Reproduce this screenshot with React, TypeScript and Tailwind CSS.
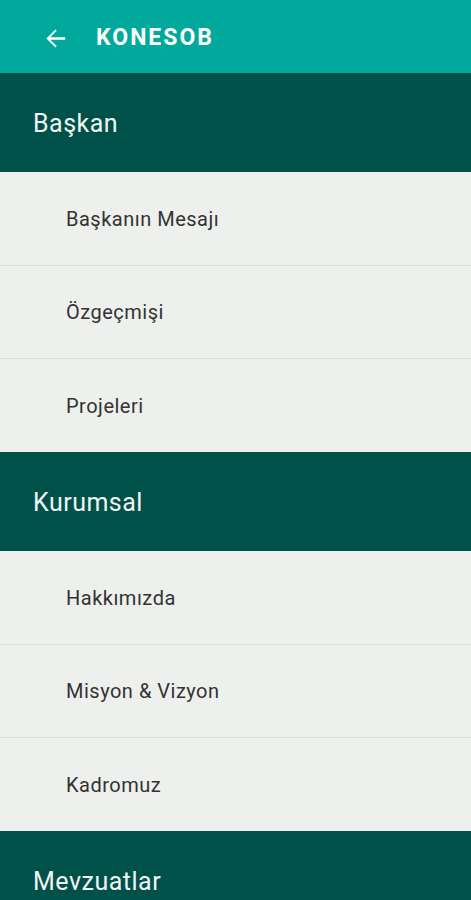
const sections = [
  { title: 'Başkan', items: ['Başkanın Mesajı', 'Özgeçmişi', 'Projeleri'] },
  { title: 'Kurumsal', items: ['Hakkımızda', 'Misyon & Vizyon', 'Kadromuz'] },
  { title: 'Mevzuatlar', items: [] as string[] },
];

function BackArrow() {
  return (
    <svg viewBox="0 0 24 24" className="h-[29px] w-[29px]" fill="currentColor">
      <path d="M20 11.05H7.6l5.45-5.45L11.9 4.6 4.5 12l7.4 7.4 1.15-1.1-5.45-5.35H20v-1.9z" />
    </svg>
  );
}

export default function App() {
  return (
    <div className="h-[900px] w-[471px] overflow-hidden bg-[#eef0ee] font-['Roboto',sans-serif]">
      <header className="flex h-[73px] items-center bg-[#00a99b] pt-[3px] text-white">
        <div className="ml-[41px]">
          <BackArrow />
        </div>
        <h1 className="ml-[26px] text-[23px] font-bold tracking-[2px]">KONESOB</h1>
      </header>
      {sections.map((s) => (
        <div key={s.title}>
          <div className="flex h-[99px] items-center bg-[#00514a] pl-[33px] pt-[3px] text-[25px] tracking-[0.5px] text-[#f1f5f4]">
            {s.title}
          </div>
          {s.items.map((item, i) => (
            <div
              key={item}
              className={`flex items-center pl-[66px] text-[20px] tracking-[0.5px] text-[#333333] ${
                i === 0 ? 'h-[94px]' : 'h-[93px]'
              } ${i < s.items.length - 1 ? 'border-b border-[#dcdedc]' : ''}`}
            >
              {item}
            </div>
          ))}
        </div>
      ))}
    </div>
  );
}
